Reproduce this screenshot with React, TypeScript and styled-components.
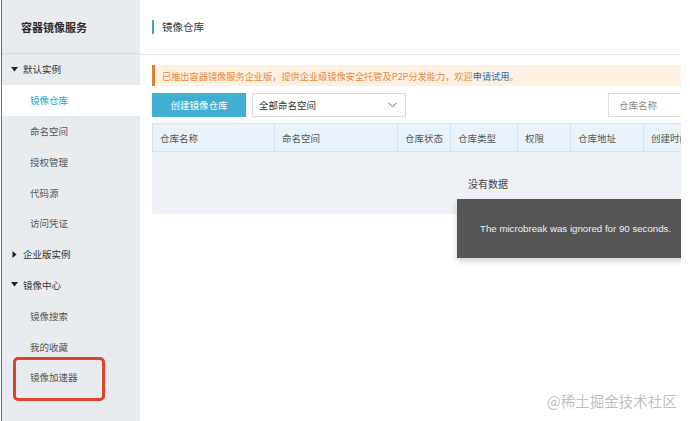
import React from 'react';
import styled, { createGlobalStyle } from 'styled-components';

const GlobalStyle = createGlobalStyle`
  *, *::before, *::after {
    box-sizing: border-box;
  }
  html, body, #root {
    height: 100%;
  }
  body {
    margin: 0;
    background: #fff;
    font-family: "Noto Sans CJK SC", "Liberation Sans", sans-serif;
    overflow: hidden;
  }
`;

const cjk = `"Noto Sans CJK SC", "Liberation Sans", sans-serif`;

const Page = styled.div`
  position: relative;
  display: flex;
  height: 100%;
  padding-left: 1px;
`;

// barra lateral
const Sidebar = styled.aside`
  width: 139px;
  flex-shrink: 0;
  background: #e9ecef;
  border-left: 1px solid #6f6f6f;
  display: flex;
  flex-direction: column;
`;

const SideTitle = styled.div`
  height: 54px;
  flex-shrink: 0;
  border-bottom: 1px solid #d7dbe0;
  display: flex;
  align-items: center;
  padding-left: 19px;
  font-family: ${cjk};
  font-size: 11px;
  font-weight: 700;
  color: #2b2b2b;
`;

const SideRow = styled.div<{ $active?: boolean; $sub?: boolean }>`
  position: relative;
  height: 30.8px;
  flex-shrink: 0;
  display: flex;
  align-items: center;
  gap: 5px;
  padding-left: ${p => (p.$sub ? '28px' : '9px')};
  background: ${p => (p.$active ? '#fff' : 'transparent')};
  color: ${p => (p.$active ? '#2ba3cc' : p.$sub ? '#555' : '#333')};
  font-family: ${cjk};
  font-size: 9.5px;
`;

const Caret = styled.span`
  display: inline-flex;
  width: 7px;
  justify-content: center;
`;

const Highlight = styled.div`
  position: absolute;
  left: 11px;
  top: -5px;
  width: 92px;
  height: 44px;
  border: 3px solid #e2412b;
  border-radius: 5px;
`;

// area principal
const Main = styled.main`
  position: relative;
  width: 541px;
  flex-shrink: 0;
  overflow: hidden;
  background: #fff;
`;

const MainHeader = styled.div`
  height: 55px;
  border-bottom: 1px solid #e2e5e9;
  display: flex;
  align-items: center;
  padding-left: 12px;
`;

const HeaderTitle = styled.div`
  border-left: 2px solid #3aa7c9;
  padding-left: 8px;
  line-height: 14px;
  font-family: ${cjk};
  font-size: 10.5px;
  color: #333;
`;

const Content = styled.div`
  width: 618px;
  padding: 10px 0 0 12px;
  display: flex;
  flex-direction: column;
`;

const Notice = styled.div`
  height: 21px;
  display: flex;
  align-items: center;
  background: #fdf1e4;
  border-left: 3px solid #e27c2c;
  padding-left: 7px;
  font-family: ${cjk};
  font-size: 9.2px;
  color: #e8893b;
  white-space: nowrap;
`;

const NoticeLink = styled.span`
  color: #2c6db5;
`;

const Toolbar = styled.div`
  margin-top: 7px;
  height: 24px;
  display: flex;
  gap: 6px;
`;

const PrimaryButton = styled.button`
  width: 94px;
  border: none;
  background: #41afd2;
  color: #fff;
  font-family: ${cjk};
  font-size: 9.5px;
  padding: 0;
`;

const Select = styled.div`
  width: 154px;
  border: 1px solid #d9d9d9;
  display: flex;
  align-items: center;
  justify-content: space-between;
  padding: 0 8px 0 6px;
  font-family: ${cjk};
  font-size: 9.5px;
  color: #333;
`;

const SearchBox = styled.div`
  margin-left: auto;
  width: 150px;
  border: 1px solid #dcdcdc;
  display: flex;
  align-items: center;
  padding-left: 10px;
  font-family: ${cjk};
  font-size: 9.5px;
  color: #888;
`;

const Table = styled.div`
  margin-top: 6px;
  width: 672px;
  flex-shrink: 0;
`;

const HeadRow = styled.div`
  height: 29px;
  display: flex;
  background: #eaf3fc;
  border: 1px solid #d3e3f1;
`;

const HeadCell = styled.div<{ $w: number }>`
  width: ${p => p.$w}px;
  flex-shrink: 0;
  display: flex;
  align-items: center;
  padding-left: 7px;
  border-right: 1px solid #d3e3f1;
  font-family: ${cjk};
  font-size: 9.5px;
  color: #555;
  white-space: nowrap;
  &:last-child {
    border-right: none;
  }
`;

const EmptyBody = styled.div`
  height: 62px;
  background: #eef2f6;
  display: flex;
  align-items: center;
  justify-content: center;
  font-family: ${cjk};
  font-size: 10px;
  color: #444;
`;

const Filler = styled.div`
  flex: 1;
  background: #fff;
`;

// aviso flotante
const Toast = styled.div`
  position: absolute;
  left: 317px;
  top: 199px;
  width: 240px;
  height: 59px;
  background: #555;
  box-shadow: 0 3px 6px rgba(0, 0, 0, 0.18);
  display: flex;
  align-items: center;
  padding-left: 23px;
  font-family: "Liberation Sans", sans-serif;
  font-size: 9.7px;
  color: #f0f0f0;
  white-space: nowrap;
`;

const Watermark = styled.div`
  position: absolute;
  left: 547px;
  top: 390px;
  font-family: ${cjk};
  font-size: 14.5px;
  color: rgba(170, 170, 170, 0.75);
  white-space: nowrap;
`;

const TriangleDown = () => (
  <svg width="7" height="5" viewBox="0 0 7 5">
    <path d="M0 0 L7 0 L3.5 4.5 Z" fill="#222" />
  </svg>
);

const TriangleRight = () => (
  <svg width="5" height="7" viewBox="0 0 5 7">
    <path d="M0.5 0 L4.5 3.5 L0.5 7 Z" fill="#222" />
  </svg>
);

const Chevron = () => (
  <svg width="9" height="6" viewBox="0 0 9 6">
    <path d="M0.5 0.8 L4.5 4.8 L8.5 0.8" fill="none" stroke="#666" strokeWidth="1" />
  </svg>
);

const columns = [
  { name: '仓库名称', w: 122 },
  { name: '命名空间', w: 123 },
  { name: '仓库状态', w: 53 },
  { name: '仓库类型', w: 67 },
  { name: '权限', w: 53 },
  { name: '仓库地址', w: 73 },
  { name: '创建时间', w: 90 },
  { name: '操作', w: 91 },
];

export default function App() {
  return (
    <>
      <GlobalStyle />
      <Page>
        <Sidebar>
          <SideTitle>容器镜像服务</SideTitle>
          <SideRow>
            <Caret><TriangleDown /></Caret>默认实例
          </SideRow>
          <SideRow $sub $active>镜像仓库</SideRow>
          <SideRow $sub>命名空间</SideRow>
          <SideRow $sub>授权管理</SideRow>
          <SideRow $sub>代码源</SideRow>
          <SideRow $sub>访问凭证</SideRow>
          <SideRow>
            <Caret><TriangleRight /></Caret>企业版实例
          </SideRow>
          <SideRow>
            <Caret><TriangleDown /></Caret>镜像中心
          </SideRow>
          <SideRow $sub>镜像搜索</SideRow>
          <SideRow $sub>我的收藏</SideRow>
          <SideRow $sub>
            镜像加速器
            <Highlight />
          </SideRow>
        </Sidebar>
        <Main>
          <MainHeader>
            <HeaderTitle>镜像仓库</HeaderTitle>
          </MainHeader>
          <Content>
            <Notice>
              已推出容器镜像服务企业版，提供企业级镜像安全托管及P2P分发能力，欢迎
              <NoticeLink>申请试用</NoticeLink>。
            </Notice>
            <Toolbar>
              <PrimaryButton>创建镜像仓库</PrimaryButton>
              <Select>
                全部命名空间
                <Chevron />
              </Select>
              <SearchBox>仓库名称</SearchBox>
            </Toolbar>
            <Table>
              <HeadRow>
                {columns.map(c => (
                  <HeadCell key={c.name} $w={c.w}>{c.name}</HeadCell>
                ))}
              </HeadRow>
              <EmptyBody>没有数据</EmptyBody>
            </Table>
          </Content>
          <Toast>The microbreak was ignored for 90 seconds.</Toast>
        </Main>
        <Filler />
        <Watermark>@稀土掘金技术社区</Watermark>
      </Page>
    </>
  );
}
